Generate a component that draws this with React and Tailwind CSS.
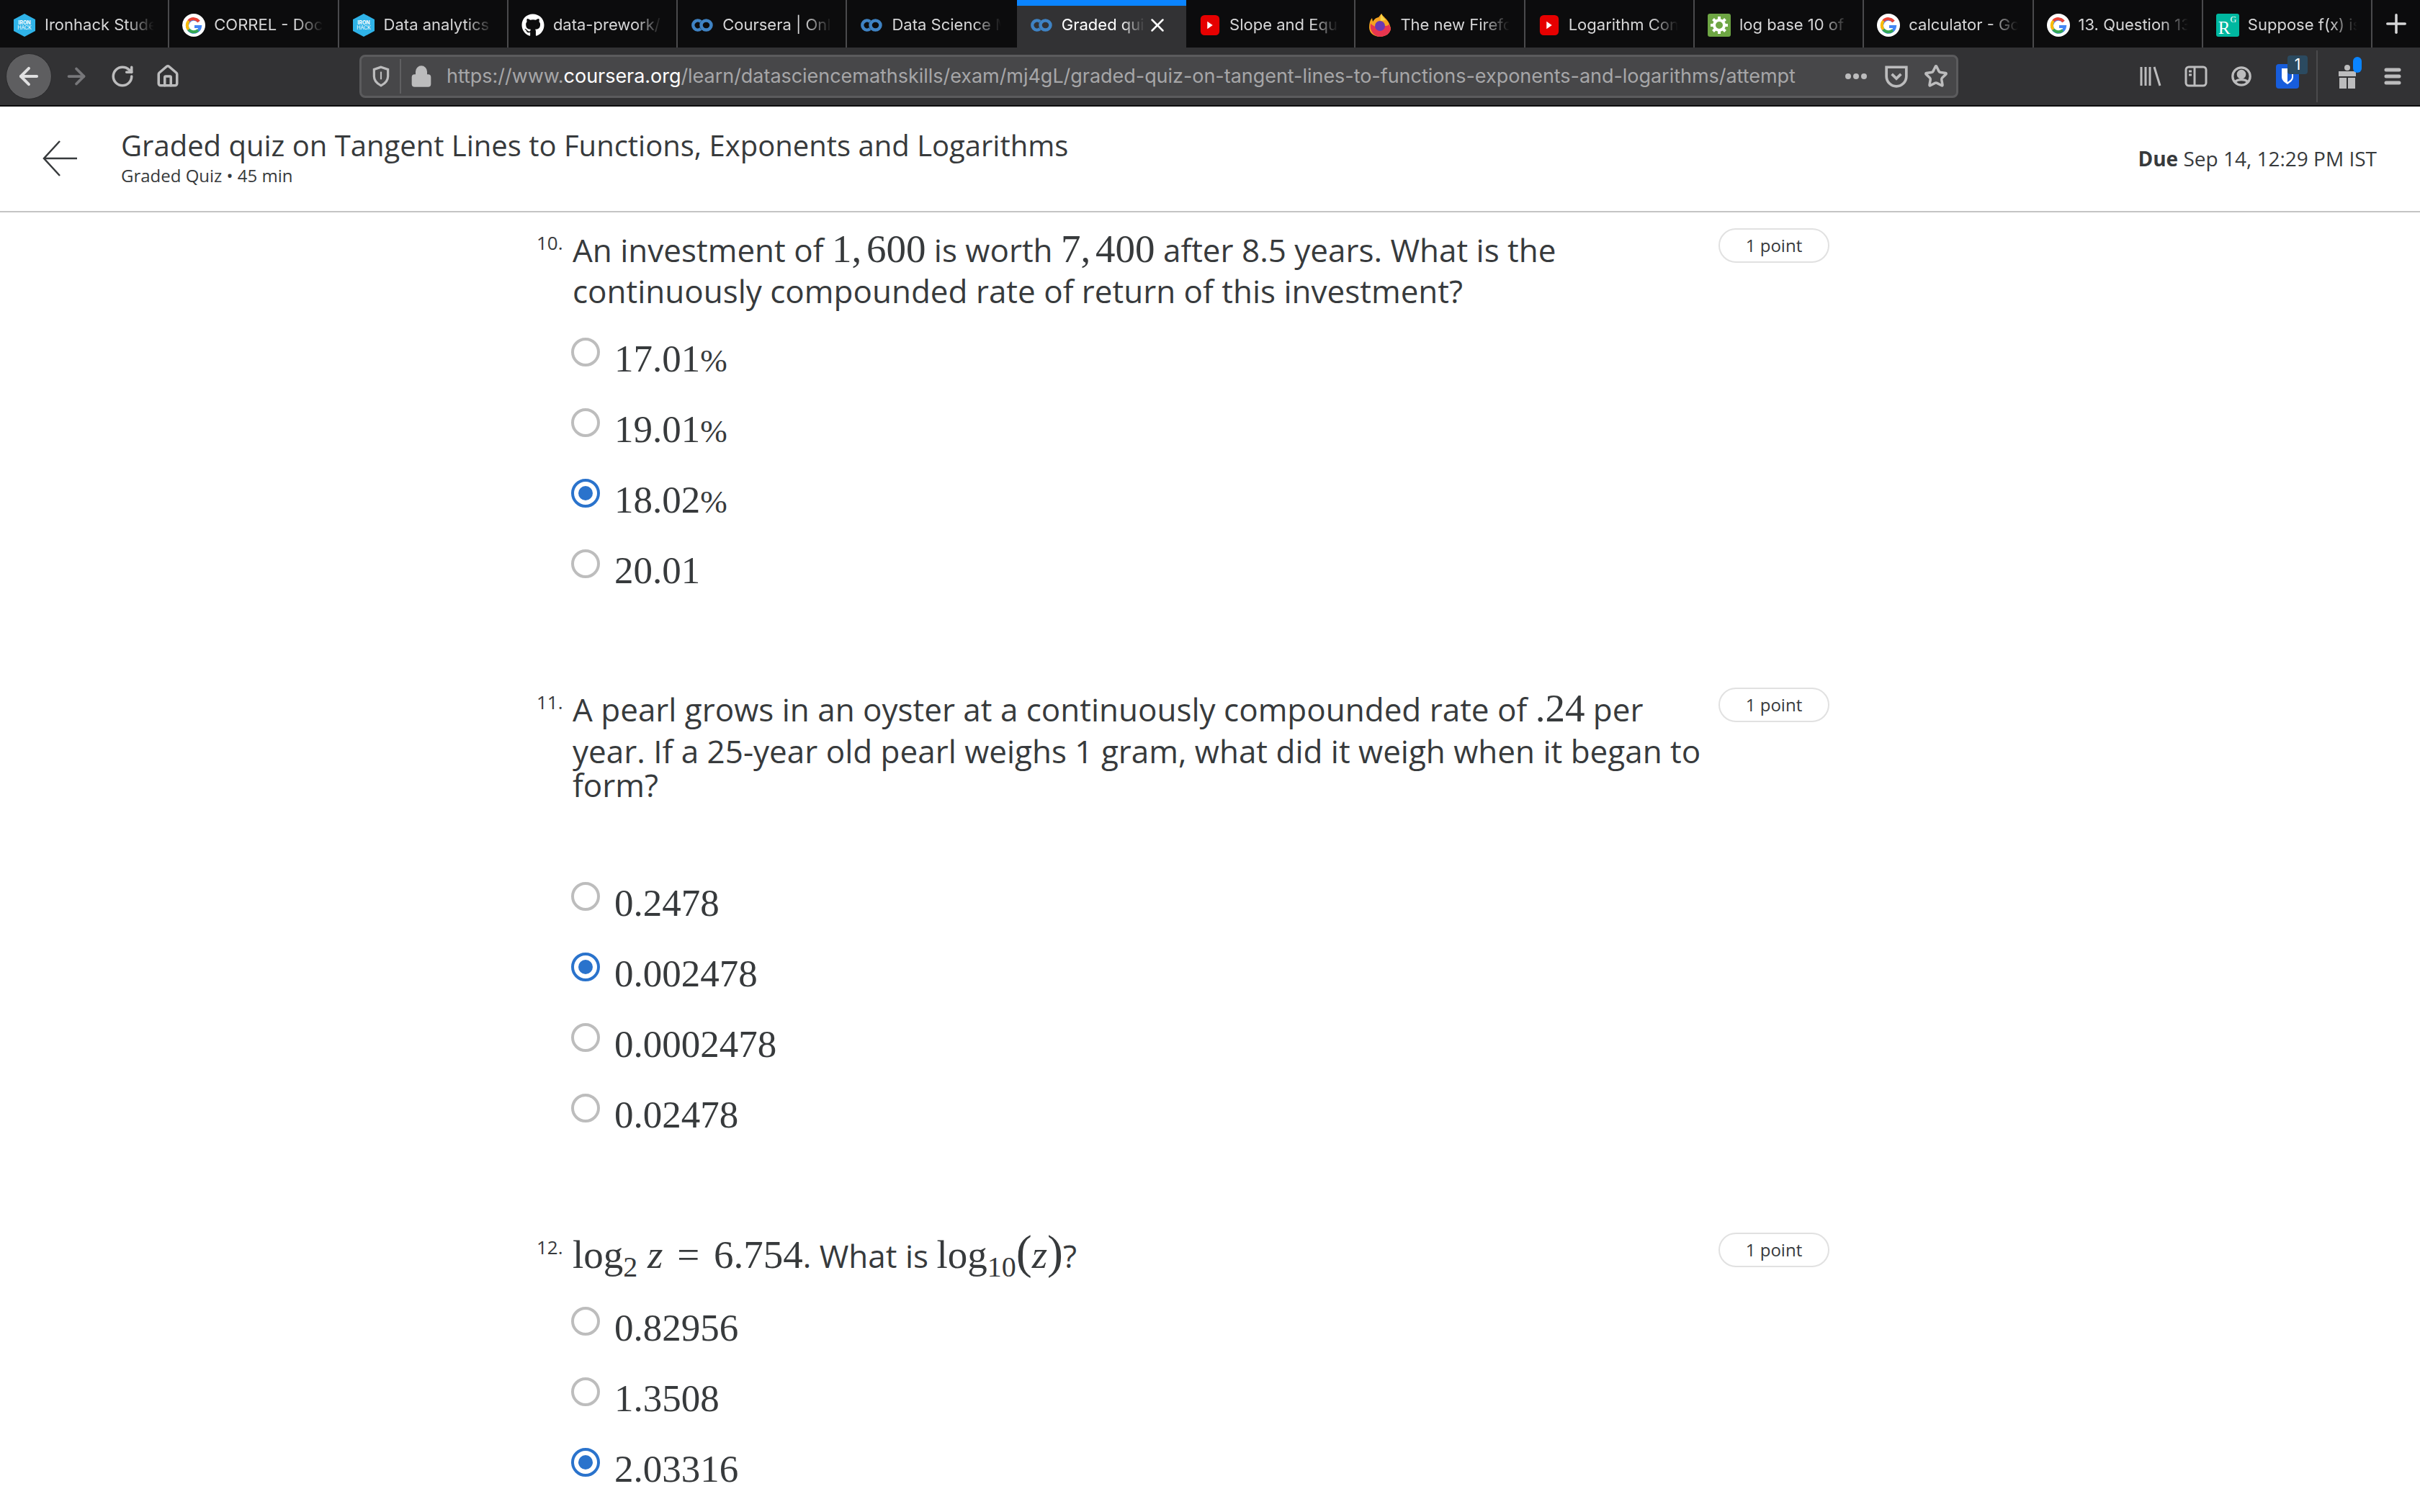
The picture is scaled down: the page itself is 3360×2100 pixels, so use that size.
import { ArrowLeft, ArrowRight, RotateCw, Home, Lock, Star, Plus, X } from "lucide-react";
import { FaGithub } from "react-icons/fa";

const GoogleIcon = () => (
  <svg viewBox="0 0 32 32" className="w-[32px] h-[32px] shrink-0">
    <circle cx="16" cy="16" r="16" fill="#fff" />
    <path d="M23 11a9 9 0 1 0 2 7h-8" fill="none" stroke="#4285f4" strokeWidth="4" />
    <path d="M23 11a9 9 0 0 0-14-1" fill="none" stroke="#ea4335" strokeWidth="4" />
    <path d="M9 10a9 9 0 0 0 0 12" fill="none" stroke="#fbbc05" strokeWidth="4" />
    <path d="M9 22a9 9 0 0 0 13 1" fill="none" stroke="#34a853" strokeWidth="4" />
  </svg>
);

const IronIcon = () => (
  <svg viewBox="0 0 32 32" className="w-[32px] h-[32px] shrink-0">
    <path d="M16 0 31 8v16l-15 8-15-8V8z" fill="#2fb3e8" />
    <text x="16" y="15" textAnchor="middle" fontSize="7" fontWeight="700" fill="#fff" fontFamily="Inter, sans-serif">IRON</text>
    <text x="16" y="22" textAnchor="middle" fontSize="7" fill="#fff" fontFamily="Inter, sans-serif">HACK</text>
  </svg>
);

const CourseraIcon = () => (
  <svg viewBox="0 0 32 32" className="w-[32px] h-[32px] shrink-0" fill="none" stroke="#3f83c4" strokeWidth="4.5">
    <path d="M14 11a6.5 6.5 0 1 0 0 10" />
    <ellipse cx="21.5" cy="16" rx="7" ry="6.5" />
  </svg>
);

const YoutubeIcon = () => (
  <svg viewBox="0 0 32 32" className="w-[30px] h-[32px] shrink-0">
    <rect x="2" y="1" width="28" height="30" rx="6" fill="#e60000" />
    <path d="M12 10.5v11l8-5.5z" fill="#fff" />
  </svg>
);

const FirefoxIcon = () => (
  <svg viewBox="0 0 32 32" className="w-[32px] h-[32px] shrink-0">
    <path d="M18 0c2 4 8 7 11 14l2 6c0 7-7 12-15 12S1 27 1 19C1 14 2 9 5 6l1 5c2-4 6-6 8-6z" fill="#f6a421" />
    <path d="M3 14c-2 10 5 18 13 18s15-5 15-12l-3-6c0 4-4 2-8 4-6 3-10 1-17-4z" fill="#e8354f" />
    <circle cx="16" cy="17" r="7" fill="#6a3ab5" />
    <path d="M18 0c1 3 3 6 6 9l-7 1c-1-4 0-7 1-10z" fill="#f7d84a" />
  </svg>
);

const GearIcon = () => (
  <svg viewBox="0 0 32 32" className="w-[32px] h-[32px] shrink-0">
    <rect width="32" height="32" rx="3" fill="#6ea644" />
    <circle cx="16" cy="16" r="7" fill="none" stroke="#fff" strokeWidth="4" />
    <path d="M16 4v5M16 23v5M4 16h5M23 16h5M7.5 7.5l4 4M20.5 20.5l4 4M24.5 7.5l-4 4M11.5 20.5l-4 4" stroke="#fff" strokeWidth="4" />
  </svg>
);

const ResearchIcon = () => (
  <div className="w-[32px] h-[32px] shrink-0 bg-[#00b8a0] rounded-[3px] flex text-white font-['Liberation_Serif',serif] leading-none pl-[3px]">
    <span className="text-[25px] mt-[7px]">R</span>
    <span className="text-[12px] mt-[2px]">G</span>
  </div>
);

const tabs = [
  { title: "Ironhack Student", icon: <IronIcon /> },
  { title: "CORREL - Docs", icon: <GoogleIcon /> },
  { title: "Data analytics", icon: <IronIcon /> },
  { title: "data-prework/", icon: <FaGithub className="w-[32px] h-[32px] shrink-0 text-white" /> },
  { title: "Coursera | Online", icon: <CourseraIcon /> },
  { title: "Data Science M", icon: <CourseraIcon />, noSep: true },
  { title: "Graded quiz", icon: <CourseraIcon />, active: true },
  { title: "Slope and Equat", icon: <YoutubeIcon /> },
  { title: "The new Firefox", icon: <FirefoxIcon /> },
  { title: "Logarithm Conv", icon: <YoutubeIcon /> },
  { title: "log base 10 of", icon: <GearIcon /> },
  { title: "calculator - Goog", icon: <GoogleIcon /> },
  { title: "13. Question 13", icon: <GoogleIcon /> },
  { title: "Suppose f(x) is", icon: <ResearchIcon /> },
];

function Tab({ title, icon, active, noSep }) {
  if (active) {
    return (
      <div className="w-[235.3px] shrink-0 h-[66px] bg-[#323234] border-t-[8px] border-[#0a84ff] flex items-center pl-[18px] text-white">
        <div className="-mt-[5px] flex items-center">
          {icon}
          <span className="ml-[12px] w-[116px] overflow-hidden whitespace-nowrap [mask-image:linear-gradient(to_right,black_70%,transparent)]">{title}</span>
          <X className="w-[30px] h-[30px] ml-[2px]" strokeWidth={2} />
        </div>
      </div>
    );
  }
  return (
    <div className={noSep ? "w-[235.3px] shrink-0 h-[66px] pt-[3px] flex items-center pl-[18px] text-[#d6d6d7]" : "w-[235.3px] shrink-0 h-[66px] pt-[3px] border-r-2 border-[#4a4a4c] flex items-center pl-[18px] text-[#d6d6d7]"}>
      {icon}
      <span className="ml-[12px] w-[152px] overflow-hidden whitespace-nowrap [mask-image:linear-gradient(to_right,black_75%,transparent)]">{title}</span>
    </div>
  );
}

function TabBar() {
  return (
    <div className="h-[66px] bg-[#0c0c0d] flex font-['Inter',sans-serif] text-[22px]">
      {tabs.map((t) => (
        <Tab key={t.title} {...t} />
      ))}
      <div className="flex-1 flex items-center justify-center text-[#d6d6d7]">
        <Plus className="w-[42px] h-[42px]" strokeWidth={2} />
      </div>
    </div>
  );
}

function Toolbar() {
  return (
    <div className="h-[82px] bg-[#323234] border-b-2 border-[#0c0c0d] flex items-center text-[#bcbcbd]">
      <div className="w-[64px] h-[64px] ml-[8px] rounded-full bg-[#5e5e60] border border-[#2a2a2c] flex items-center justify-center text-[#e0e0e1]">
        <ArrowLeft className="w-[38px] h-[38px]" strokeWidth={2.5} />
      </div>
      <ArrowRight className="w-[36px] h-[36px] ml-[16px] text-[#77777a]" strokeWidth={2.5} />
      <RotateCw className="w-[34px] h-[34px] ml-[29px]" strokeWidth={2.5} />
      <Home className="w-[34px] h-[34px] ml-[29px]" strokeWidth={2.5} />
      <div className="ml-[249px] w-[2220px] h-[60px] bg-[#474749] border-[3px] border-[#5b5b5d] rounded-[8px] flex items-center">
        <svg viewBox="0 0 24 28" className="w-[26px] h-[30px] ml-[14px] shrink-0" fill="none" stroke="#bcbcbd" strokeWidth="3">
          <path d="M12 2 3 5v9c0 6 5 10 9 12 4-2 9-6 9-12V5z" />
          <path d="M12 8v10" strokeWidth="2" />
        </svg>
        <div className="w-[2px] h-[48px] bg-[#5f5f61] ml-[13px]" />
        <Lock className="w-[32px] h-[34px] ml-[12px] text-[#bcbcbd] fill-[#bcbcbd]" strokeWidth={2} />
        <div className="ml-[19px] w-[1878px] whitespace-nowrap font-['Inter',sans-serif] text-[27px] tracking-[-0.04px] text-[#a6a6a8]">
          https://www.<span className="text-white">coursera.org</span>/learn/datasciencemathskills/exam/mj4gL/graded-quiz-on-tangent-lines-to-functions-exponents-and-logarithms/attempt
        </div>
        <div className="ml-[62px] w-[34px] flex justify-center gap-[3px]">
          <span className="w-[8px] h-[8px] rounded-full bg-[#bcbcbd]" />
          <span className="w-[8px] h-[8px] rounded-full bg-[#bcbcbd]" />
          <span className="w-[8px] h-[8px] rounded-full bg-[#bcbcbd]" />
        </div>
        <svg viewBox="0 0 32 32" className="w-[34px] h-[34px] ml-[22px]" fill="none" stroke="#bcbcbd" strokeWidth="3.5">
          <path d="M3 4h26v12a13 13 0 0 1-26 0z" />
          <path d="m10 13 6 6 6-6" />
        </svg>
        <Star className="w-[34px] h-[36px] ml-[21px]" strokeWidth={2.5} />
      </div>
      <div className="ml-[251px] flex items-center">
        <svg viewBox="0 0 32 32" className="w-[32px] h-[36px]" fill="none" stroke="#bcbcbd" strokeWidth="3">
          <path d="M3 3v26M9 3v26M15 3v26M21 3l8 26" />
        </svg>
        <svg viewBox="0 0 32 32" className="w-[32px] h-[34px] ml-[31px]" fill="none" stroke="#bcbcbd" strokeWidth="3">
          <rect x="2" y="3" width="28" height="26" rx="4" />
          <path d="M14 3v26M6 9h4M6 14h4" />
        </svg>
        <svg viewBox="0 0 32 32" className="w-[30px] h-[34px] ml-[32px]" fill="none" stroke="#bcbcbd" strokeWidth="3.5">
          <circle cx="16" cy="16" r="13" />
          <circle cx="16" cy="13" r="5" fill="#bcbcbd" />
          <path d="M7 24c4-4 14-4 18 0" />
        </svg>
        <div className="relative ml-[33px] w-[32px] h-[34px] bg-[#175ddc] rounded-[4px] flex items-center justify-center">
          <svg viewBox="0 0 20 24" className="w-[20px] h-[26px]">
            <path d="M2 1h16v12c0 5-5 8-8 10-3-2-8-5-8-10z" fill="#fff" />
            <path d="M10 3h6v10c0 3-3 5-6 7z" fill="#175ddc" />
          </svg>
          <span className="absolute -top-[12px] left-[16px] w-[28px] h-[26px] rounded-[4px] bg-[#2b4a60] text-white text-[21px] leading-[26px] text-center font-['Inter',sans-serif]">1</span>
        </div>
        <div className="w-[2px] h-[72px] bg-[#4a4a4c] ml-[24px]" />
        <div className="relative ml-[27px]">
          <svg viewBox="0 0 28 34" className="w-[28px] h-[36px]" fill="#bcbcbd">
            <rect x="2" y="10" width="24" height="7" />
            <rect x="3" y="19" width="10" height="15" />
            <rect x="15" y="19" width="10" height="15" />
            <circle cx="14" cy="5" r="4" />
          </svg>
          <span className="absolute -top-[9px] left-[22px] w-[12px] h-[22px] rounded-full bg-[#0a84ff]" />
        </div>
        <svg viewBox="0 0 24 24" className="w-[24px] h-[24px] ml-[37px]" stroke="#bcbcbd" strokeWidth="5" strokeLinecap="round">
          <path d="M3 3h18M3 12h18M3 21h18" />
        </svg>
      </div>
    </div>
  );
}

function PageHeader() {
  return (
    <div className="h-[147px] bg-white border-b-2 border-[#c4c4c4] flex items-center text-[#373a3c] font-['Open_Sans',sans-serif]">
      <svg viewBox="0 0 50 52" className="w-[50px] h-[52px] ml-[59px] -mt-[2px]" fill="none" stroke="#373a3c" strokeWidth="2.5">
        <path d="M48 26H2M24 2 2 26l22 24" />
      </svg>
      <div className="ml-[59px] flex-1 -mt-[4px]">
        <div className="text-[40px] leading-[50px]">Graded quiz on Tangent Lines to Functions, Exponents and Logarithms</div>
        <div className="text-[24px] leading-[34px]">Graded Quiz • 45 min</div>
      </div>
      <div className="mr-[60px] text-[28px] -mt-[2px]">
        <span className="font-bold">Due</span> Sep 14, 12:29 PM IST
      </div>
    </div>
  );
}

const Sub = ({ children }) => <span className="text-[40px] relative top-[12px] leading-none">{children}</span>;

function QText({ children, h }) {
  return <div style={{ height: h }} className="whitespace-nowrap">{children}</div>;
}

const M = ({ children }) => <span className="font-['Liberation_Serif',serif] text-[55px]">{children}</span>;

// amounts like "1, 600" have a thin gap after the comma
const Amount = ({ children }) => <span className="font-['Liberation_Serif',serif] text-[55px] [word-spacing:-7px]">{children}</span>;

const Paren = ({ children }) => <span className="text-[66px] font-light leading-none">{children}</span>;

function Radio({ checked }) {
  if (checked) {
    return (
      <div className="w-[40px] h-[40px] rounded-full border-[4px] border-[#2a73cc] flex items-center justify-center shrink-0">
        <div className="w-[20px] h-[20px] rounded-full bg-[#2a73cc]" />
      </div>
    );
  }
  return <div className="w-[40px] h-[40px] rounded-full border-[4px] border-[#bdbdbd] shrink-0" />;
}

function Options({ items }) {
  return (
    <div>
      {items.map((o) => (
        <div key={o.text} className="h-[98px] flex items-start">
          <Radio checked={o.checked} />
          <div className="ml-[20px] font-['Liberation_Serif',serif] text-[53px] leading-[58px]">
            {o.text}
            {o.percent && <span className="text-[45px]">%</span>}
          </div>
        </div>
      ))}
    </div>
  );
}

function Question({ num, lines, options, top, gap }) {
  return (
    <div style={{ marginTop: top }} className="flex items-start">
      <div className="w-[50px] text-[26px] leading-[34px] mt-[3px] shrink-0">{num}</div>
      <div className="w-[1591px] shrink-0 text-[44px] leading-[58px]">
        {lines}
        <div style={{ marginTop: gap }} className="ml-[-2px]">
          <Options items={options} />
        </div>
      </div>
      <div className="w-[154px] h-[48px] rounded-full border-2 border-[#e1e1e1] flex items-center justify-center text-[24px]">1 point</div>
    </div>
  );
}

function Content() {
  return (
    <div className="pl-[745px] bg-white text-[#373a3c] font-['Open_Sans',sans-serif]">
      <Question
        num="10."
        top={22}
        gap={36}
        lines={
          <>
            <QText h={58}>An investment of <Amount>1, 600</Amount> is worth <Amount>7, 400</Amount> after 8.5 years. What is the</QText>
            <QText h={58}>continuously compounded rate of return of this investment?</QText>
          </>
        }
        options={[
          { text: "17.01", percent: true },
          { text: "19.01", percent: true },
          { text: "18.02", percent: true, checked: true },
          { text: "20.01" },
        ]}
      />
      <Question
        num="11."
        top={94}
        gap={117}
        lines={
          <>
            <QText h={59}>A pearl grows in an oyster at a continuously compounded rate of <M>.24</M> per</QText>
            <QText h={47}>year. If a 25-year old pearl weighs 1 gram, what did it weigh when it began to</QText>
            <QText h={47}>form?</QText>
          </>
        }
        options={[{ text: "0.2478" }, { text: "0.002478", checked: true }, { text: "0.0002478" }, { text: "0.02478" }]}
      />
      <Question
        num="12."
        top={95}
        gap={37}
        lines={
          <div className="-mt-[6px]">
            <QText h={72}>
              <M>
                log<Sub>2</Sub> <i>z</i> <span className="mx-[6px]">=</span> 6.754
              </M>
              . What is{" "}
              <M>
                log<Sub>10</Sub>
                <Paren>(</Paren>
                <i>z</i>
                <Paren>)</Paren>
              </M>
              ?
            </QText>
          </div>
        }
        options={[{ text: "0.82956" }, { text: "1.3508" }, { text: "2.03316", checked: true }]}
      />
    </div>
  );
}

export default function App() {
  return (
    <div className="w-[3360px] h-[2100px] overflow-hidden bg-white">
      <TabBar />
      <Toolbar />
      <PageHeader />
      <Content />
    </div>
  );
}
